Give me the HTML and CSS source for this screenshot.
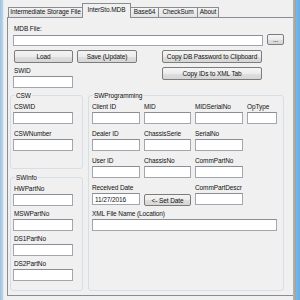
FILE: index.html
```html
<!DOCTYPE html>
<html lang="en">

<head>
    <meta charset="UTF-8">
    <title>InterSto.MDB</title>
    <link rel="stylesheet" href="styles.css">
</head>

<body>
    <div class="window">
        <div class="edge-left"></div>
        <div class="client">
            <div class="tabs">
                <div class="tab tab-isf">Intermediate Storage File</div>
                <div class="tab tab-mdb selected">InterSto.MDB</div>
                <div class="tab tab-b64">Base64</div>
                <div class="tab tab-sum">CheckSum</div>
                <div class="tab tab-about">About</div>
            </div>
            <div class="panel">
                <div class="page">
                    <label class="lbl">MDB File:</label>
                    <div class="file-row">
                        <input class="txt txt-file" type="text">
                        <button class="btn btn-browse">...</button>
                    </div>

                    <div class="top-grid">
                        <div class="btn-pair">
                            <button class="btn btn-load">Load</button>
                            <button class="btn btn-save">Save (Update)</button>
                        </div>
                        <button class="btn btn-copy">Copy DB Password to Clipboard</button>
                        <div class="field">
                            <label class="lbl">SWID</label>
                            <input class="txt txt-id" type="text">
                        </div>
                        <button class="btn btn-copy">Copy IDs to XML Tab</button>
                    </div>

                    <div class="groups">
                        <div class="left-col">
                            <div class="group group-csw">
                                <div class="group-title">CSW</div>
                                <div class="field">
                                    <label class="lbl">CSWID</label>
                                    <input class="txt txt-id" type="text">
                                </div>
                                <div class="field next">
                                    <label class="lbl">CSWNumber</label>
                                    <input class="txt txt-id" type="text">
                                </div>
                            </div>

                            <div class="group group-swinfo">
                                <div class="group-title">SWInfo</div>
                                <div class="field">
                                    <label class="lbl">HWPartNo</label>
                                    <input class="txt txt-id" type="text">
                                </div>
                                <div class="field close">
                                    <label class="lbl">MSWPartNo</label>
                                    <input class="txt txt-id" type="text">
                                </div>
                                <div class="field close">
                                    <label class="lbl">DS1PartNo</label>
                                    <input class="txt txt-id" type="text">
                                </div>
                                <div class="field close">
                                    <label class="lbl">DS2PartNo</label>
                                    <input class="txt txt-id" type="text">
                                </div>
                            </div>
                        </div>

                        <div class="group group-prog">
                            <div class="group-title">SWProgramming</div>
                            <div class="prog-grid">
                                <div class="field"><label class="lbl">Client ID</label><input class="txt" type="text"></div>
                                <div class="field"><label class="lbl">MID</label><input class="txt" type="text"></div>
                                <div class="field"><label class="lbl">MIDSerialNo</label><input class="txt" type="text"></div>
                                <div class="field"><label class="lbl">OpType</label><input class="txt" type="text"></div>

                                <div class="field"><label class="lbl">Dealer ID</label><input class="txt" type="text"></div>
                                <div class="field"><label class="lbl">ChassisSerie</label><input class="txt" type="text"></div>
                                <div class="field"><label class="lbl">SerialNo</label><input class="txt" type="text"></div>
                                <div></div>

                                <div class="field"><label class="lbl">User ID</label><input class="txt" type="text"></div>
                                <div class="field"><label class="lbl">ChassisNo</label><input class="txt" type="text"></div>
                                <div class="field"><label class="lbl">CommPartNo</label><input class="txt" type="text"></div>
                                <div></div>

                                <div class="field"><label class="lbl">Received Date</label><input class="txt" type="text" value="11/27/2016"></div>
                                <button class="btn btn-date">&lt;- Set Date</button>
                                <div class="field"><label class="lbl">CommPartDescr</label><input class="txt" type="text"></div>
                                <div></div>

                                <div class="field xml"><label class="lbl">XML File Name (Location)</label><input class="txt txt-xml" type="text"></div>
                            </div>
                        </div>
                    </div>
                </div>
            </div>
        </div>
        <div class="edge-right"></div>
    </div>
</body>

</html>
```

FILE: styles.css
```css
* {
    margin: 0;
    padding: 0;
    box-sizing: border-box;
    font-family: 'Liberation Sans', Arial, sans-serif;
    font-size: 6.5px;
    line-height: 8px;
    letter-spacing: -0.1px;
    color: #111;
}

body {
    width: 300px;
    height: 300px;
    overflow: hidden;
    background-color: #f0f0f0;
}

.window {
    display: flex;
    height: 300px;
}

.edge-left {
    width: 3px;
    background: linear-gradient(to right, #9fc2e0, #b9d4ec);
}

.edge-right {
    width: 7px;
    background: linear-gradient(to right, #b4b4b4 0, #a0a0a0 3px, #78b6e6 3px, #6aaee4 100%);
}

.client {
    width: 290px;
    padding: 3px 0 0 3px;
    background-color: #f0f0f0;
    border-left: 1px solid #e4e9ee;
}

/* tab strip */
.tabs {
    display: flex;
    align-items: flex-end;
    height: 15px;
    margin-bottom: -1px;
    padding-left: 1px;
    position: relative;
    z-index: 1;
}

.tab {
    height: 10px;
    margin-bottom: 1px;
    margin-right: -1px;
    border: 1px solid #898c95;
    border-bottom: none;
    background: linear-gradient(#f3f3f3, #e3e3e3);
    text-align: center;
    white-space: nowrap;
}

.tab.selected {
    height: 15px;
    margin-bottom: 0;
    padding-top: 2px;
    background: #f0f0f0;
    position: relative;
    z-index: 2;
}

.tab-isf { width: 75px; }
.tab-mdb { width: 49px; }
.tab-b64 { width: 29px; }
.tab-sum { width: 40px; }
.tab-about { width: 22px; }

.panel {
    width: 287px;
    height: 279px;
    border: 1px solid #898c95;
    background-color: #f0f0f0;
}

.page {
    padding: 7px 0 0 5px;
}

.lbl {
    display: block;
    white-space: nowrap;
    margin-left: 1px;
}

/* inputs and buttons */
.txt {
    display: block;
    height: 12px;
    width: 100%;
    padding: 0 2px;
    border: 1px solid #a3a6ad;
    border-top-color: #8a8d95;
    background-color: #fff;
    outline: none;
}

.btn {
    display: block;
    height: 13px;
    border: 1px solid #7c7c7c;
    border-radius: 2px;
    background: linear-gradient(#f4f4f4 0%, #ececec 50%, #dfdfdf 51%, #d6d6d6 100%);
    text-align: center;
    white-space: nowrap;
    cursor: pointer;
}

.file-row {
    display: flex;
    align-items: flex-start;
    gap: 4px;
    margin-top: 2px;
}

.txt-file {
    width: 250px;
    height: 11px;
}

.btn-browse {
    width: 17px;
    height: 11px;
    margin-top: -1px;
    line-height: 7px;
}

.top-grid {
    display: grid;
    grid-template-columns: 149px 100px;
    row-gap: 4px;
    margin-top: 4px;
}

.btn-pair {
    display: flex;
    gap: 4px;
    padding-left: 1px;
}

.btn-load { width: 59px; }
.btn-save { width: 60px; }

.field {
    display: flex;
    flex-direction: column;
    gap: 1px;
}

.txt-id {
    width: 60px;
}

/* group boxes */
.groups {
    display: flex;
    gap: 5px;
    margin: 7px 0 0 -3px;
}

.left-col {
    display: flex;
    flex-direction: column;
    gap: 8px;
    width: 73px;
}

.group {
    border: 1px solid #d5dfe5;
    border-radius: 3px;
}

.group-title {
    display: table;
    margin: -4px 0 3px 2px;
    padding: 0 1px;
    background-color: #f0f0f0;
}

.group-csw {
    height: 74px;
    padding-left: 2px;
}

.group-swinfo {
    height: 114px;
    padding-left: 2px;
}

.field.next {
    margin-top: 6px;
}

.field.close {
    margin-top: 4px;
}

.group-prog {
    width: 196px;
    height: 196px;
    padding-left: 3px;
}

.group-prog .group-title {
    margin-left: 1px;
}

.group-prog .lbl {
    margin-left: 0;
}

.prog-grid {
    display: grid;
    grid-template-columns: 48px 47px 48px 30px;
    column-gap: 4px;
    row-gap: 6px;
}

.btn-date {
    align-self: end;
    height: 12px;
    margin-bottom: -1px;
    line-height: 9px;
}

.xml {
    grid-column: 1 / -1;
    margin-top: -1px;
}

.txt-xml {
    width: 185px;
}
```
